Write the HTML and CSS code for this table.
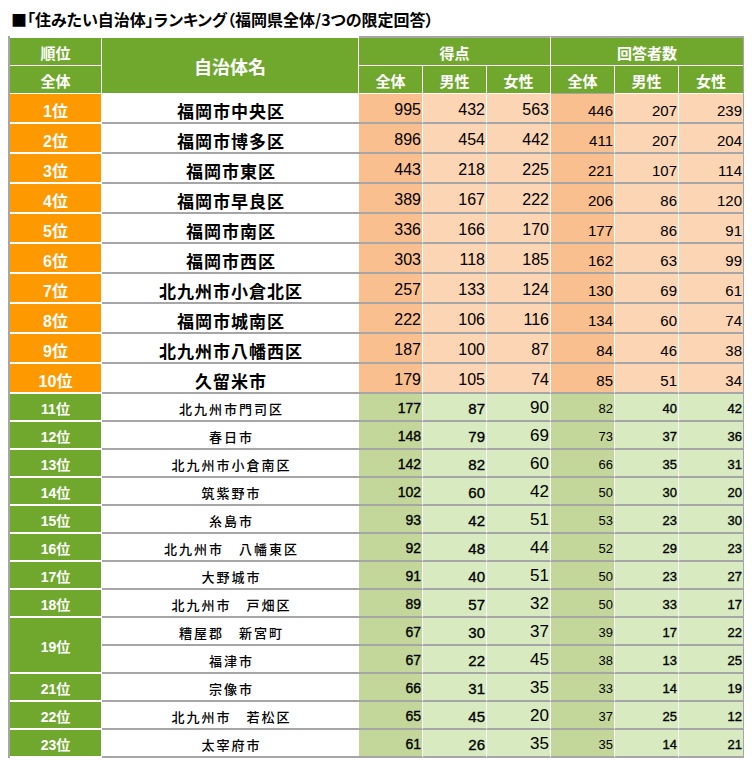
FILE: index.html
```html
<!DOCTYPE html>
<html lang="ja">
<head>
<meta charset="utf-8">
<title>住みたい自治体ランキング</title>
<link rel="stylesheet" href="styles.css">
</head>
<body>
<div class="title">■「住みたい自治体」ランキング（福岡県全体/3つの限定回答）</div>
<div class="tbl">
  <div class="hd r1">
    <div class="h">順位</div>
    <div class="h name">自治体名</div>
    <div class="h grp">得点</div>
    <div class="h grp last">回答者数</div>
  </div>
  <div class="hd r2">
    <div class="h">全体</div>
    <div class="h">全体</div>
    <div class="h">男性</div>
    <div class="h">女性</div>
    <div class="h gline">全体</div>
    <div class="h">男性</div>
    <div class="h last">女性</div>
  </div>

  <div class="row top"><div class="rk">1位</div><div class="nm">福岡市中央区</div><div class="v sa">995</div><div class="v sm">432</div><div class="v sf">563</div><div class="v ca">446</div><div class="v cm">207</div><div class="v cf">239</div></div>
  <div class="row top"><div class="rk">2位</div><div class="nm">福岡市博多区</div><div class="v sa">896</div><div class="v sm">454</div><div class="v sf">442</div><div class="v ca">411</div><div class="v cm">207</div><div class="v cf">204</div></div>
  <div class="row top"><div class="rk">3位</div><div class="nm">福岡市東区</div><div class="v sa">443</div><div class="v sm">218</div><div class="v sf">225</div><div class="v ca">221</div><div class="v cm">107</div><div class="v cf">114</div></div>
  <div class="row top"><div class="rk">4位</div><div class="nm">福岡市早良区</div><div class="v sa">389</div><div class="v sm">167</div><div class="v sf">222</div><div class="v ca">206</div><div class="v cm">86</div><div class="v cf">120</div></div>
  <div class="row top"><div class="rk">5位</div><div class="nm">福岡市南区</div><div class="v sa">336</div><div class="v sm">166</div><div class="v sf">170</div><div class="v ca">177</div><div class="v cm">86</div><div class="v cf">91</div></div>
  <div class="row top"><div class="rk">6位</div><div class="nm">福岡市西区</div><div class="v sa">303</div><div class="v sm">118</div><div class="v sf">185</div><div class="v ca">162</div><div class="v cm">63</div><div class="v cf">99</div></div>
  <div class="row top"><div class="rk">7位</div><div class="nm">北九州市小倉北区</div><div class="v sa">257</div><div class="v sm">133</div><div class="v sf">124</div><div class="v ca">130</div><div class="v cm">69</div><div class="v cf">61</div></div>
  <div class="row top"><div class="rk">8位</div><div class="nm">福岡市城南区</div><div class="v sa">222</div><div class="v sm">106</div><div class="v sf">116</div><div class="v ca">134</div><div class="v cm">60</div><div class="v cf">74</div></div>
  <div class="row top"><div class="rk">9位</div><div class="nm">北九州市八幡西区</div><div class="v sa">187</div><div class="v sm">100</div><div class="v sf">87</div><div class="v ca">84</div><div class="v cm">46</div><div class="v cf">38</div></div>
  <div class="row top"><div class="rk">10位</div><div class="nm">久留米市</div><div class="v sa">179</div><div class="v sm">105</div><div class="v sf">74</div><div class="v ca">85</div><div class="v cm">51</div><div class="v cf">34</div></div>

  <div class="row low"><div class="rk">11位</div><div class="nm">北九州市門司区</div><div class="v sa">177</div><div class="v sm">87</div><div class="v sf">90</div><div class="v ca">82</div><div class="v cm">40</div><div class="v cf">42</div></div>
  <div class="row low"><div class="rk">12位</div><div class="nm">春日市</div><div class="v sa">148</div><div class="v sm">79</div><div class="v sf">69</div><div class="v ca">73</div><div class="v cm">37</div><div class="v cf">36</div></div>
  <div class="row low"><div class="rk">13位</div><div class="nm">北九州市小倉南区</div><div class="v sa">142</div><div class="v sm">82</div><div class="v sf">60</div><div class="v ca">66</div><div class="v cm">35</div><div class="v cf">31</div></div>
  <div class="row low"><div class="rk">14位</div><div class="nm">筑紫野市</div><div class="v sa">102</div><div class="v sm">60</div><div class="v sf">42</div><div class="v ca">50</div><div class="v cm">30</div><div class="v cf">20</div></div>
  <div class="row low"><div class="rk">15位</div><div class="nm">糸島市</div><div class="v sa">93</div><div class="v sm">42</div><div class="v sf">51</div><div class="v ca">53</div><div class="v cm">23</div><div class="v cf">30</div></div>
  <div class="row low"><div class="rk">16位</div><div class="nm">北九州市　八幡東区</div><div class="v sa">92</div><div class="v sm">48</div><div class="v sf">44</div><div class="v ca">52</div><div class="v cm">29</div><div class="v cf">23</div></div>
  <div class="row low"><div class="rk">17位</div><div class="nm">大野城市</div><div class="v sa">91</div><div class="v sm">40</div><div class="v sf">51</div><div class="v ca">50</div><div class="v cm">23</div><div class="v cf">27</div></div>
  <div class="row low"><div class="rk">18位</div><div class="nm">北九州市　戸畑区</div><div class="v sa">89</div><div class="v sm">57</div><div class="v sf">32</div><div class="v ca">50</div><div class="v cm">33</div><div class="v cf">17</div></div>
  <div class="row low"><div class="rk span2">19位</div><div class="nm">糟屋郡　新宮町</div><div class="v sa">67</div><div class="v sm">30</div><div class="v sf">37</div><div class="v ca">39</div><div class="v cm">17</div><div class="v cf">22</div></div>
  <div class="row low"><div class="nm cont">福津市</div><div class="v sa">67</div><div class="v sm">22</div><div class="v sf">45</div><div class="v ca">38</div><div class="v cm">13</div><div class="v cf">25</div></div>
  <div class="row low"><div class="rk">21位</div><div class="nm">宗像市</div><div class="v sa">66</div><div class="v sm">31</div><div class="v sf">35</div><div class="v ca">33</div><div class="v cm">14</div><div class="v cf">19</div></div>
  <div class="row low"><div class="rk">22位</div><div class="nm">北九州市　若松区</div><div class="v sa">65</div><div class="v sm">45</div><div class="v sf">20</div><div class="v ca">37</div><div class="v cm">25</div><div class="v cf">12</div></div>
  <div class="row low"><div class="rk">23位</div><div class="nm">太宰府市</div><div class="v sa">61</div><div class="v sm">26</div><div class="v sf">35</div><div class="v ca">35</div><div class="v cm">14</div><div class="v cf">21</div></div>
</div>
</body>
</html>
```
FILE: styles.css
```css
* {
  box-sizing: border-box;
}

body {
  margin: 8px;
  background: #fff;
  color: #000;
  font-family: "Liberation Sans", "Noto Sans CJK JP", sans-serif;
}

.title {
  height: 28px;
  padding-left: 3px;
  font-family: "Noto Sans CJK JP", sans-serif;
  font-weight: bold;
  font-size: 16px;
  line-height: 22px;
  font-feature-settings: "palt";
  white-space: nowrap;
}

.tbl {
  display: grid;
  grid-template-columns: 92px 257px repeat(6, 64px);
  grid-template-rows: 30px 28px repeat(10, 30px) repeat(13, 28px);
  width: max-content;
  border-left: 2px solid #a6a6a6;
  border-right: 2px solid #a6a6a6;
}

.hd,
.row {
  display: contents;
}

.hd > div,
.row > div {
  display: flex;
  align-items: center;
  justify-content: center;
  white-space: nowrap;
}

/* header */
.h {
  background: #70a82e;
  color: #fff;
  font-family: "Noto Sans CJK JP", sans-serif;
  font-weight: bold;
  font-size: 15px;
  padding-top: 2px;
  border-right: 1px solid #fff;
  border-bottom: 1px solid #fff;
}

.r1 .h {
  border-top: 2px solid #fff;
}

.r1 .h.grp {
  border-top-color: #a6a6a6;
  grid-column: span 3;
}

.h.name {
  grid-row: span 2;
  font-size: 18px;
  padding-top: 0;
}

.h.last {
  border-right: 0;
}

.h.gline {
  border-bottom-color: #a6a6a6;
}

/* rank column */
.rk {
  color: #fff;
  font-weight: bold;
  border-right: 1px solid #fff;
  border-bottom: 2px solid #fff;
}

.top .rk {
  background: #ff9900;
  font-size: 16px;
  padding-top: 4px;
}

.low .rk {
  background: #70a82e;
  font-size: 14px;
  padding-top: 2px;
}

.rk.span2 {
  grid-row: span 2;
}

/* name column */
.nm {
  border-bottom: 2px solid #a6a6a6;
  font-family: "Noto Sans CJK JP", sans-serif;
}

.nm.cont {
  grid-column: 2;
}

.top .nm {
  font-weight: bold;
  font-size: 17px;
  letter-spacing: 1px;
  padding-top: 4px;
  padding-left: 1px;
}

.low .nm {
  font-size: 13px;
  font-weight: 500;
  letter-spacing: 2px;
  padding-top: 2px;
  padding-left: 2px;
}

/* numbers */
.row > .v {
  justify-content: flex-end;
  padding-right: 1px;
  border-right: 1px solid #fff;
  border-bottom: 2px solid #a6a6a6;
}

.row > .v.cf {
  border-right: 0;
}

.top .v {
  background: #fcd5b4;
  padding-top: 4px;
  font-size: 16px;
}

.top .v.sa,
.top .v.ca {
  background: #fabf8f;
}

.top .v.ca,
.top .v.cm,
.top .v.cf {
  font-size: 15px;
}

.low .v {
  background: #d8eabf;
  padding-top: 2px;
  font-size: 13px;
}

.low .v.sa,
.low .v.ca {
  background: #c4d79b;
}

.low .v.sa {
  font-size: 14px;
  -webkit-text-stroke: 0.35px #000;
}

.low .v.sm {
  font-size: 15px;
  -webkit-text-stroke: 0.35px #000;
}

.low .v.sf {
  font-size: 17px;
}

.low .v.cm,
.low .v.cf {
  font-size: 13px;
  -webkit-text-stroke: 0.35px #000;
}
```
